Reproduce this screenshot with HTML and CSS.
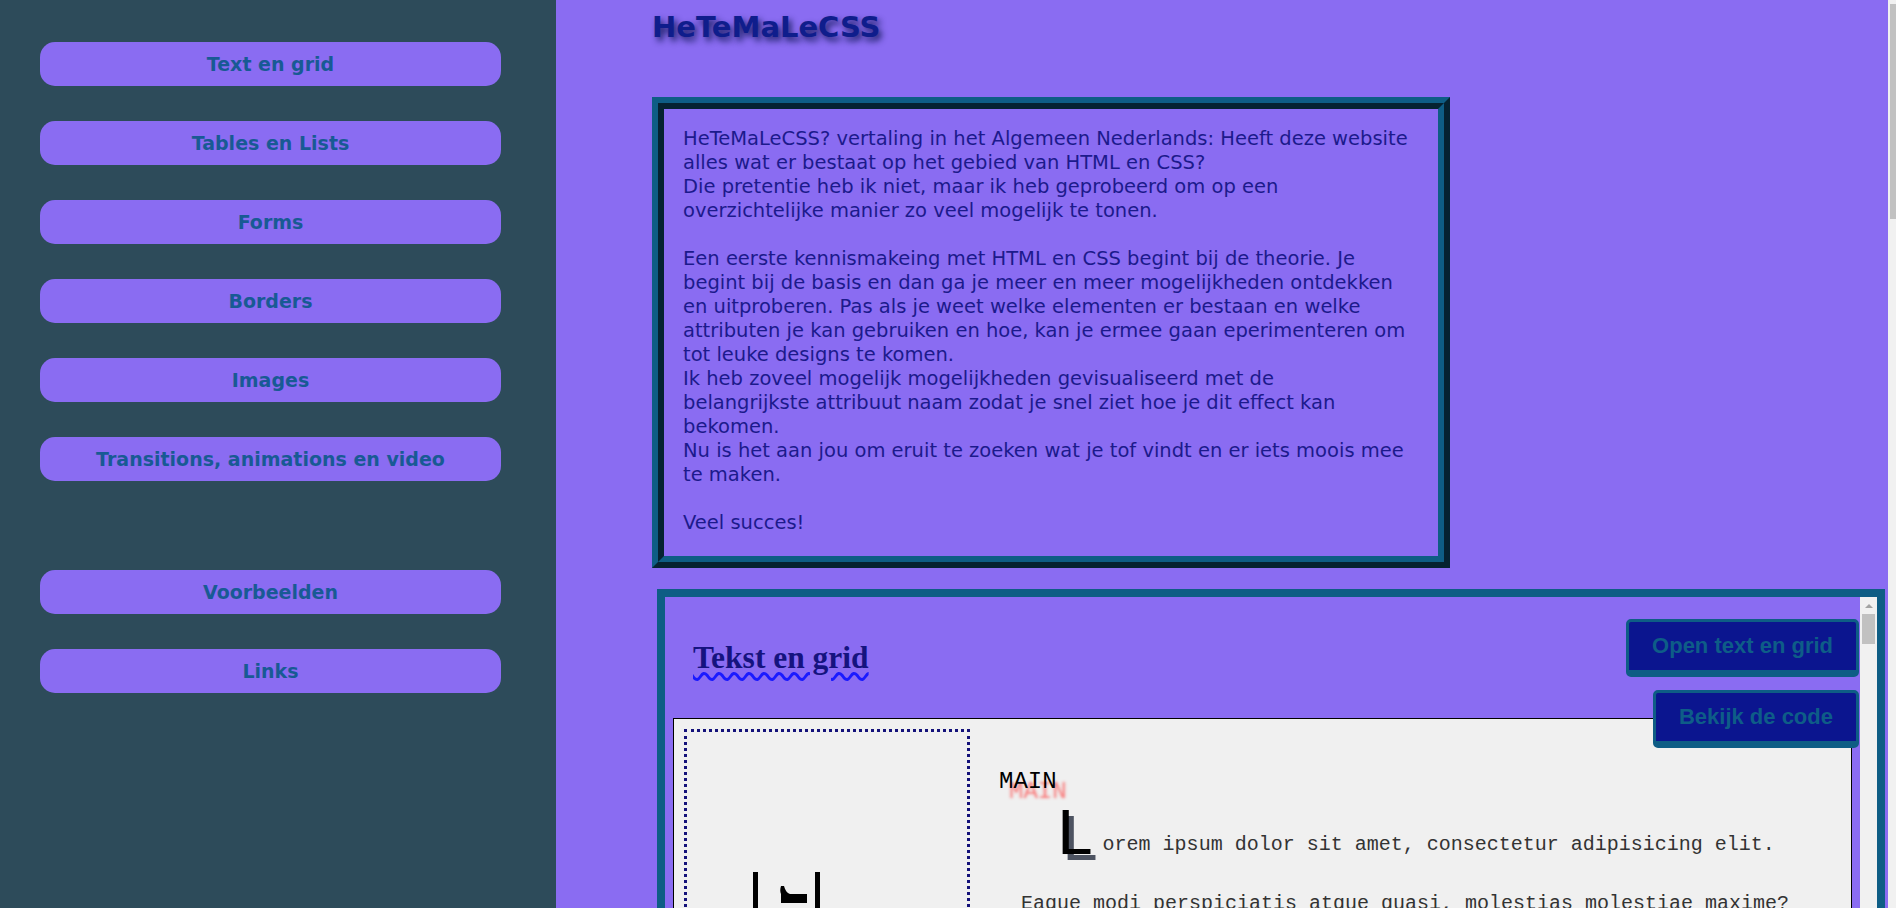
FILE: index.html
```html
<!DOCTYPE html>
<html lang="nl">
<head>
<meta charset="utf-8">
<title>HeTeMaLeCSS</title>
<link rel="stylesheet" href="styles.css">
</head>
<body>
<div class="layout">
  <nav class="sidebar">
    <ul class="nav">
      <li><a class="nav-link" href="#">Text en grid</a></li>
      <li><a class="nav-link" href="#">Tables en Lists</a></li>
      <li><a class="nav-link" href="#">Forms</a></li>
      <li><a class="nav-link" href="#">Borders</a></li>
      <li><a class="nav-link" href="#">Images</a></li>
      <li><a class="nav-link" href="#">Transitions, animations en video</a></li>
    </ul>
    <ul class="nav nav-bottom">
      <li><a class="nav-link" href="#">Voorbeelden</a></li>
      <li><a class="nav-link" href="#">Links</a></li>
    </ul>
  </nav>

  <main class="content">
    <h1 class="site-title">HeTeMaLeCSS</h1>

    <section class="intro">
      <p>HeTeMaLeCSS? vertaling in het Algemeen Nederlands: Heeft deze website alles wat er bestaat op het gebied van HTML en CSS?<br>
      Die pretentie heb ik niet, maar ik heb geprobeerd om op een overzichtelijke manier zo veel mogelijk te tonen.<br><br>
      Een eerste kennismakeing met HTML en CSS begint bij de theorie. Je begint bij de basis en dan ga je meer en meer mogelijkheden ontdekken en uitproberen. Pas als je weet welke elementen er bestaan en welke attributen je kan gebruiken en hoe, kan je ermee gaan eperimenteren om tot leuke designs te komen.<br>
      Ik heb zoveel mogelijk mogelijkheden gevisualiseerd met de<br>belangrijkste attribuut naam zodat je snel ziet hoe je dit effect kan<br>bekomen.<br>
      Nu is het aan jou om eruit te zoeken wat je tof vindt en er iets moois mee te maken.<br><br>
      Veel succes!</p>
    </section>

    <section class="demo">
      <div class="demo-view">
        <header class="demo-head">
          <h2 class="demo-title">Tekst en grid</h2>
        </header>
        <a class="demo-btn btn-open" href="#">Open text en grid</a>
        <a class="demo-btn btn-code" href="#">Bekijk de code</a>
        <div class="grid">
          <aside class="grid-aside">
            <div class="deco">
              <span class="deco-bar"></span>
              <svg class="deco-mark" width="27" height="18" viewBox="0 0 27 18"><path d="M1 0 h3 c1 4 3 7 6 8 h17 v9 h-26 v-9 c-1 -2 -1 -5 0 -8 z" fill="#000"/></svg>
              <span class="deco-bar"></span>
            </div>
          </aside>
          <div class="grid-main">
            <h3 class="main-label">MAIN</h3>
            <p class="lead"><span class="drop">L</span>orem ipsum dolor sit amet, consectetur adipisicing elit.</p>
            <p class="follow">Eaque modi perspiciatis atque quasi, molestias molestiae maxime?</p>
          </div>
        </div>
      </div>
      <div class="demo-scroll">
        <div class="scroll-up"><span class="scroll-arrow"></span></div>
        <div class="scroll-thumb"></div>
      </div>
    </section>
  </main>

  <div class="page-scroll"><div class="page-thumb"></div></div>
</div>
</body>
</html>
```

FILE: styles.css
```css
* { box-sizing: border-box; }
html, body { margin: 0; height: 100%; }
body {
  overflow: hidden;
  font-family: "DejaVu Sans", "Noto Sans", sans-serif;
}
.layout { display: flex; height: 100vh; }

/* Sidebar */
.sidebar {
  width: 556px;
  flex: none;
  background: #2d4b5a;
  padding: 42px 0 0 40px;
}
.nav {
  list-style: none;
  margin: 0;
  padding: 0;
  width: 461px;
  display: flex;
  flex-direction: column;
  gap: 35px;
}
.nav-bottom { margin-top: 89px; }
.nav-link {
  display: flex;
  align-items: center;
  justify-content: center;
  height: 44px;
  border-radius: 15px;
  background: #8a6cf2;
  color: #185a94;
  font-weight: bold;
  font-size: 19px;
  text-decoration: none;
}

/* Main content */
.content {
  flex: 1;
  min-width: 0;
  background: #8a6cf2;
  overflow: hidden;
  padding: 0 3px 0 96px;
}
.site-title {
  margin: 11px 0 0;
  font-size: 29px;
  line-height: 33px;
  color: #0f1d8c;
  text-shadow: 3px 4px 6px rgba(10, 20, 80, 0.85);
}
.intro {
  width: 798px;
  margin-top: 53px;
  border: 12px ridge #0e5d85;
  padding: 18px 19px 21px;
  color: #1c1a8c;
  font-size: 19.5px;
  line-height: 24px;
}
.intro p { margin: 0; }

/* Demo frame */
.demo {
  margin: 21px 0 0 5px;
  height: 420px;
  border: 8px solid #0e5d85;
  display: flex;
}
.demo-view {
  flex: 1;
  min-width: 0;
  position: relative;
  padding: 0 8px;
  overflow: hidden;
}
.demo-head {
  height: 121px;
  padding-left: 20px;
  display: flex;
  align-items: center;
}
.demo-title {
  margin: 0;
  font-family: "Liberation Serif", serif;
  font-size: 31.5px;
  font-weight: bold;
  color: #15137f;
  text-decoration: underline wavy #1a1aff;
  text-decoration-thickness: 3px;
  text-underline-offset: 4px;
}
.demo-btn {
  position: absolute;
  right: 1px;
  padding: 11px 23px;
  border: 3px solid #0e5d85;
  border-bottom-width: 7px;
  border-radius: 5px;
  background: #0b158f;
  color: #0e5d87;
  font-family: "Liberation Sans", Arial, sans-serif;
  font-weight: bold;
  font-size: 22px;
  line-height: 26px;
  text-decoration: none;
  white-space: nowrap;
}
.btn-open { top: 22px; }
.btn-code { top: 93px; }

.grid {
  height: 400px;
  border: 1px solid #000;
  background: #f0f0f0;
  padding: 10px;
  display: grid;
  grid-template-columns: 286px 1fr;
  column-gap: 29px;
  align-items: start;
}
.grid-aside {
  height: 400px;
  border: 3px dotted #14127a;
  padding: 140px 0 0 66px;
}
.deco { display: flex; align-items: flex-start; }
.deco-bar { width: 5px; height: 80px; background: #000; }
.deco-mark { margin: 14px 8px 0 22px; display: block; }

.grid-main {
  font-family: "Liberation Mono", "Courier New", monospace;
  color: #333;
}
.main-label {
  margin: 39px 0 0;
  font-size: 24px;
  font-weight: normal;
  line-height: normal;
  color: #000;
  text-shadow: 10px 10px 3px rgba(255, 40, 40, 0.6);
}
.lead {
  margin: 38px 0 0;
  padding-left: 56px;
  font-size: 20px;
  line-height: 24px;
}
.drop {
  font-size: 66px;
  line-height: 0;
  vertical-align: -4px;
  margin-right: 8px;
  color: #000;
  text-shadow: 5px 6px 0 #4d5361;
}
.follow {
  margin: 35px 0 0;
  padding-left: 22px;
  font-size: 20px;
  line-height: 24px;
}

/* Frame scrollbar */
.demo-scroll {
  width: 17px;
  flex: none;
  background: #f1f1f1;
}
.scroll-up {
  height: 17px;
  display: flex;
  align-items: center;
  justify-content: center;
}
.scroll-arrow {
  width: 0;
  height: 0;
  border-left: 4px solid transparent;
  border-right: 4px solid transparent;
  border-bottom: 4px solid #a3a3a3;
}
.scroll-thumb {
  height: 30px;
  margin: 0 2px;
  background: #c1c1c1;
}

/* Page scrollbar */
.page-scroll {
  width: 8px;
  flex: none;
  background: #f1f1f1;
  padding: 4px 0 0 2px;
}
.page-thumb { height: 215px; background: #c1c1c1; }
```
